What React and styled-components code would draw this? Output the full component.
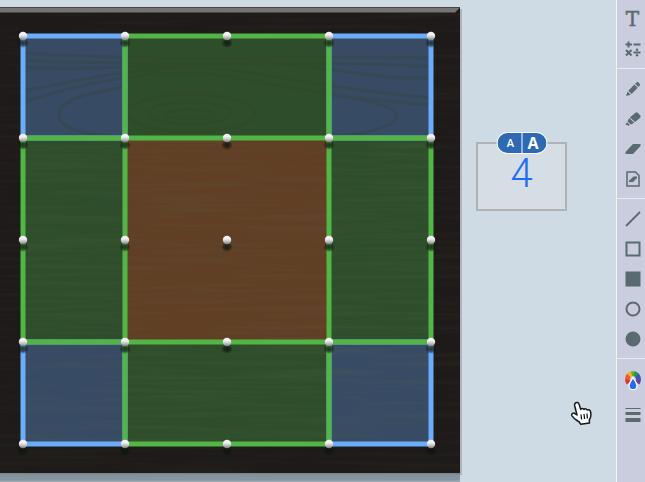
import React from "react";
import styled, { createGlobalStyle } from "styled-components";

const GlobalStyle = createGlobalStyle`
  *, *::before, *::after { box-sizing: border-box; }
  body { margin: 0; font-family: "Open Sans", "Liberation Sans", sans-serif; }
`;

const Page = styled.div`
  display: flex;
  height: 100vh;
  overflow: hidden;
  background: #cfdbe4;
`;

const Workspace = styled.main`
  position: relative;
  flex: 1;
  min-width: 0;
  display: flex;
  align-items: flex-start;
  gap: 16px;
  padding-top: 7px;
`;

const Board = styled.svg`
  display: block;
  flex: none;
`;

const Note = styled.section`
  position: relative;
  flex: none;
  margin-top: 135px;
  border: 2px solid #b0b2b4;
  background: #d4dee4;
`;

const NoteInput = styled.input`
  display: block;
  width: 87px;
  height: 65px;
  padding: 0 0 6px;
  border: 0;
  outline: 0;
  background: transparent;
  color: #1e6cf5;
  font-family: Roboto, sans-serif;
  font-size: 40px;
  font-weight: 300;
  line-height: 56px;
  text-align: center;
`;

const SizePill = styled.div`
  position: absolute;
  top: -12px;
  left: 50%;
  transform: translateX(-50%);
  display: flex;
  gap: 1px;
  overflow: hidden;
  border: 1px solid #fff;
  border-radius: 11px;
  background: #fff;
`;

const SizeButton = styled.button`
  width: 24px;
  height: 20px;
  padding: ${(p) => (p.$large ? "0 2px 0 0" : "0 0 0 3px")};
  border: 0;
  background: #2e69b3;
  color: #fff;
  font-family: "Open Sans", sans-serif;
  font-size: ${(p) => (p.$large ? 16 : 11)}px;
  font-weight: ${(p) => (p.$large ? 700 : 600)};
  line-height: 20px;
`;

const Toolbar = styled.nav`
  flex: none;
  width: 29px;
  padding-top: 4px;
  border-left: 1px solid #f4f5f5;
  background: #c9cddd;
`;

const ToolGroup = styled.div`
  display: flex;
  flex-direction: column;

  & + & {
    margin-top: 4px;
    padding-top: 5px;
    border-top: 1px solid #e9ebed;
  }
`;

const ToolButton = styled.button`
  display: flex;
  align-items: center;
  justify-content: center;
  width: 100%;
  height: ${(p) => (p.$tall ? 34 : 30)}px;
  padding: 0 0 0 3px;
  border: 0;
  background: transparent;
  color: #596a70;

  svg { display: block; }
`;

const Letter = styled.span`
  font-family: "DejaVu Serif", serif;
  font-size: 20px;
  line-height: 30px;
  -webkit-text-stroke: 0.5px currentColor;
`;

const Cursor = styled.svg`
  position: absolute;
  left: 570px;
  top: 400px;
  pointer-events: none;
`;

const XS = [23, 125, 227, 329, 431];
const YS = [29, 131, 233, 335, 437];
const GREEN = "#52b646";
const BLUE = "#6bacfb";

const blueSquares = [[23, 29], [329, 29], [23, 335], [329, 335]];
const greenAreas = [
  [125, 29, 204, 102],
  [23, 131, 102, 204],
  [329, 131, 102, 204],
  [125, 335, 204, 102],
];

function Geoboard() {
  return (
    <Board width="460" height="482" viewBox="0 0 460 482" overflow="visible" role="img" aria-label="Geoboard">
      <defs>
        <linearGradient id="peg" x1="0" y1="0" x2="0" y2="1">
          <stop offset="0.35" stopColor="#f2f0f2" />
          <stop offset="0.65" stopColor="#c4c4c6" />
          <stop offset="1" stopColor="#797c79" />
        </linearGradient>
        <linearGradient id="drop" x1="0" y1="0" x2="0" y2="1">
          <stop offset="0" stopColor="#76828c" />
          <stop offset="0.25" stopColor="#84929c" />
          <stop offset="0.7" stopColor="#8796a0" />
          <stop offset="1" stopColor="#b5c2cb" />
        </linearGradient>
        <radialGradient id="shade">
          <stop offset="0" stopColor="#0c140c" stopOpacity="0.8" />
          <stop offset="0.5" stopColor="#0c140c" stopOpacity="0.6" />
          <stop offset="1" stopColor="#0c140c" stopOpacity="0" />
        </radialGradient>
        <filter id="grain" x="0" y="0" width="1" height="1">
          <feTurbulence type="fractalNoise" baseFrequency="0.008 0.22" numOctaves="3" seed="4" />
          <feColorMatrix values="0 0 0 0 0.13  0 0 0 0 0.15  0 0 0 0 0.07  1.6 0 0 0 -0.65" />
        </filter>
      </defs>
      <path d="M460 2h2v466h-2z" fill="#aab5bf" />
      <rect y="466" width="460" height="10" fill="url(#drop)" />
      <rect width="460" height="466" fill="#1d1a19" />
      <rect y="6" width="460" height="460" filter="url(#grain)" opacity="0.12" />
      <path d="M0 0.500h460l-5 5H0z" fill="#777375" />

      {blueSquares.map(([x, y]) => (
        <rect key={`${x}-${y}`} x={x} y={y} width="102" height="102" fill="#374b64" />
      ))}
      {greenAreas.map(([x, y, w, h]) => (
        <rect key={`${x}-${y}`} x={x} y={y} width={w} height={h} fill="#2e4e2b" />
      ))}
      <rect x="125" y="131" width="204" height="204" fill="#603f25" />

      <rect x="23" y="131" width="408" height="306" filter="url(#grain)" opacity="0.22" />
      <g fill="none" stroke="#33401c" opacity="0.22" strokeWidth="3">
        <ellipse cx="190" cy="107" rx="24" ry="5" />
        <ellipse cx="190" cy="106" rx="42" ry="11" />
        <ellipse cx="191" cy="106" rx="64" ry="19" strokeWidth="4" />
        <path d="M125 80c-30 5-66 11-66 28s37 20 66 22M329 88c34 4 68 11 68 21s-30 18-62 20" />
        <path d="M23 95c50-15 100-29 160-29s115 23 248 32" />
        <path d="M23 84c60-12 120-25 180-23s90 17 228 30" />
        <path d="M23 60c60 6 222-9 282-1s90 14 126 12M23 53c90 7 310-1 408 7M23 46c150 10 280 2 408 5" />
      </g>

      <g fill="none" stroke={BLUE} strokeWidth="5" strokeLinejoin="round">
        {blueSquares.map(([x, y]) => (
          <rect key={`${x}-${y}`} x={x} y={y} width="102" height="102" />
        ))}
      </g>
      <g fill="none" stroke={GREEN} strokeWidth="5">
        {greenAreas.map(([x, y, w, h]) => (
          <rect key={`${x}-${y}`} x={x} y={y} width={w} height={h} />
        ))}
      </g>
      {YS.map((y) =>
        XS.map((x) => (
          <g key={`${x}-${y}`}>
            <ellipse cx={x} cy={y + 7} rx="6" ry="5" fill="url(#shade)" />
            <circle cx={x} cy={y} r="4.2" fill="url(#peg)" />
          </g>
        ))
      )}
    </Board>
  );
}

function Icon({ children }) {
  return (
    <svg width="16" height="16" viewBox="0 0 16 16" fill="currentColor" aria-hidden="true">
      {children}
    </svg>
  );
}

const MathIcon = () => (
  <Icon>
    <path d="M3.5 0.500v6M0.500 3.500h6.500M8.500 3.500h7M1 9l5.500 5.500M6.500 9l-5.500 5.500M8.500 11.500h7" fill="none" stroke="currentColor" strokeWidth="2" />
    <circle cx="12" cy="8.700" r="1.2" />
    <circle cx="12" cy="14.300" r="1.2" />
  </Icon>
);
const PencilIcon = () => (
  <Icon>
    <path d="M1 15l1.500-4.500 3.200 3.200zM3.300 9.700L9.400 3.600l3.300 3.200-6.100 6.100zM10.200 2.800l1.500-1.500q.8-.6 1.600 0l1.500 1.600q.6.7 0 1.500L13.400 6z" />
  </Icon>
);
const MarkerIcon = () => (
  <Icon>
    <path d="M0.500 13.500l1.500-2.300 2.800 2.600-1 1zM2.500 10.500l1.800-3.400 4.900 4.600-3.400 1.800zM4.900 6.400L10.700 1.500h1.800L15.500 4.700v1.800l-5.500 4.600z" />
  </Icon>
);
const EraserIcon = () => (
  <Icon><path d="M8 3h7.500v2L8 13H0.500v-2z" /></Icon>
);
const ClearPageIcon = () => (
  <Icon>
    <path d="M2 1h8.500L14 4.500V15H2z" fill="none" stroke="currentColor" strokeWidth="1.500" />
    <path d="M8.500 5.500H12v1.400L8 11H4V9.700z" />
  </Icon>
);
const LineIcon = () => (
  <Icon><path d="M1 15L15 1" stroke="currentColor" strokeWidth="1.800" /></Icon>
);
const SquareIcon = ({ filled }) => (
  <Icon>
    <rect x="1.500" y="1.500" width="13" height="13" stroke="currentColor" strokeWidth="2" fill={filled ? "currentColor" : "none"} />
  </Icon>
);
const CircleIcon = ({ filled }) => (
  <Icon>
    <circle cx="8" cy="8" r="6.500" stroke="currentColor" strokeWidth="2" fill={filled ? "currentColor" : "none"} />
  </Icon>
);

const ColorIcon = () => (
  <svg width="16" height="20" viewBox="0 0 16 20" aria-hidden="true">
    <g fill="none" strokeWidth="5">
      <path d="M3.700 12A5.300 5.300 0 0 1 2.700 8" stroke="#d93638" />
      <path d="M2.700 8.500A5.300 5.300 0 0 1 4.100 4.300" stroke="#ef5b27" />
      <path d="M3.900 4.500A5.300 5.300 0 0 1 7 2.800" stroke="#f5b51b" />
      <path d="M6.600 2.900A5.300 5.300 0 0 1 9.400 2.900" stroke="#68ad32" />
      <path d="M9 2.800A5.300 5.300 0 0 1 12.100 4.500" stroke="#279653" />
      <path d="M11.900 4.300A5.300 5.300 0 0 1 13.300 8.500" stroke="#3559b5" />
      <path d="M13.300 8A5.300 5.300 0 0 1 12.300 12" stroke="#6e3ca4" />
    </g>
    <path d="M8 6.500C6.500 9.600 4 11.500 4 14.700a4 4 0 0 0 8 0C12 11.500 9.500 9.600 8 6.500z" fill="#236cf2" stroke="#fff" strokeWidth="1.300" />
  </svg>
);
const WeightIcon = () => (
  <Icon><path d="M0.500 1h15v1h-15zM0.500 5h15v3h-15zM0.500 11h15v4h-15z" /></Icon>
);

const groups = [
  [
    ["Text", <Letter key="t">T</Letter>],
    ["Math", <MathIcon key="m" />],
  ],
  [
    ["Pencil", <PencilIcon key="p" />],
    ["Marker", <MarkerIcon key="m" />],
    ["Eraser", <EraserIcon key="e" />],
    ["Clear page", <ClearPageIcon key="c" />],
  ],
  [
    ["Line", <LineIcon key="l" />],
    ["Rectangle", <SquareIcon key="r" />],
    ["Filled rectangle", <SquareIcon key="f" filled />],
    ["Ellipse", <CircleIcon key="e" />],
    ["Filled ellipse", <CircleIcon key="c" filled />],
  ],
  [
    ["Color", <ColorIcon key="c" />, true],
    ["Line weight", <WeightIcon key="w" />, true],
  ],
];

export default function App() {
  return (
    <Page>
      <GlobalStyle />
      <Workspace>
        <Geoboard />
        <Note>
          <NoteInput type="text" defaultValue="4" aria-label="Note text" />
          <SizePill>
            <SizeButton type="button" aria-label="Smaller text">A</SizeButton>
            <SizeButton type="button" aria-label="Larger text" $large>A</SizeButton>
          </SizePill>
        </Note>
        <Cursor width="24" height="26" viewBox="0 0 24 26" aria-hidden="true">
          <path
            d="M5 3.500C6.500 1.600 8.600 2.500 9 4l1.700 5.200c1-1.200 2.600-1 3.300.2 1-1 2.600-.6 3.100.6 1.500-.8 3 0 3.400 1.500.6 2.500.8 5.500-1.200 8.500l.2 3-8.700 1.300-1.500-2.300C6.500 20.500 3.200 18 1.800 15.500 1 13.500 3.500 12.300 5.200 13.800L7 15 4.600 5.500Q4.400 4.400 5 3.500z"
            fill="#fff" stroke="#16191b" strokeWidth="1.500" strokeLinejoin="round"
          />
          <path d="M11 14.500l.6 5M14 14l.6 5M17 13.500l.4 5" stroke="#16191b" strokeWidth="1.300" />
        </Cursor>
      </Workspace>
      <Toolbar aria-label="Drawing tools">
        {groups.map((tools, i) => (
          <ToolGroup key={i}>
            {tools.map(([label, icon, tall]) => (
              <ToolButton key={label} type="button" aria-label={label} $tall={tall}>
                {icon}
              </ToolButton>
            ))}
          </ToolGroup>
        ))}
      </Toolbar>
    </Page>
  );
}
